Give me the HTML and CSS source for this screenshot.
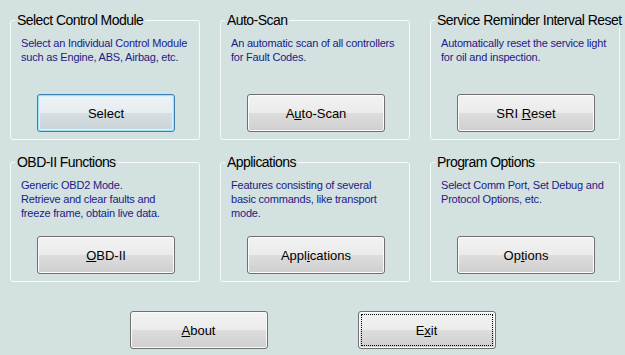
FILE: index.html
```html
<!DOCTYPE html>
<html lang="en">
<head>
  <meta charset="UTF-8" />
  <title>Main Menu</title>
  <link rel="stylesheet" href="styles.css">
</head>
<body>
  <div class="groups">
    <fieldset class="group">
      <legend>Select Control Module</legend>
      <p class="desc">Select an Individual Control Module<br>such as Engine, ABS, Airbag, etc.</p>
      <button class="btn default">Select</button>
    </fieldset>
    <fieldset class="group">
      <legend>Auto-Scan</legend>
      <p class="desc">An automatic scan of all controllers<br>for Fault Codes.</p>
      <button class="btn">A<u>u</u>to-Scan</button>
    </fieldset>
    <fieldset class="group">
      <legend>Service Reminder Interval Reset</legend>
      <p class="desc">Automatically reset the service light<br>for oil and inspection.</p>
      <button class="btn">SRI <u>R</u>eset</button>
    </fieldset>
    <fieldset class="group">
      <legend>OBD-II Functions</legend>
      <p class="desc">Generic OBD2 Mode.<br>Retrieve and clear faults and<br>freeze frame, obtain live data.</p>
      <button class="btn"><u>O</u>BD-II</button>
    </fieldset>
    <fieldset class="group">
      <legend>Applications</legend>
      <p class="desc">Features consisting of several<br>basic commands, like transport<br>mode.</p>
      <button class="btn">Appl<u>i</u>cations</button>
    </fieldset>
    <fieldset class="group">
      <legend>Program Options</legend>
      <p class="desc">Select Comm Port, Set Debug and<br>Protocol Options, etc.</p>
      <button class="btn">Op<u>t</u>ions</button>
    </fieldset>
  </div>
  <div class="bottom">
    <button class="btn"><u>A</u>bout</button>
    <button class="btn focused">E<u>x</u>it</button>
  </div>
</body>
</html>
```

FILE: styles.css
```css
* { box-sizing: border-box; }
html, body { margin: 0; padding: 0; }
body {
  background-color: #d3e1e1;
  font-family: "Liberation Sans", Arial, sans-serif;
  width: 625px;
  height: 355px;
  overflow: hidden;
  padding-top: 12px;
}
.groups {
  display: grid;
  grid-template-columns: repeat(3, 190px);
  column-gap: 20px;
  row-gap: 14px;
  padding-left: 10px;
}
.group {
  margin: 0;
  padding: 0 4px 0 10px;
  height: 128px;
  border: 1px solid #f7fbfb;
  border-radius: 3px;
  display: flex;
  flex-direction: column;
  min-width: 0;
}
.group legend {
  margin-left: -6px;
  padding: 0 2px;
  font-size: 14px;
  letter-spacing: -0.55px;
  line-height: 16px;
  color: #000;
  white-space: nowrap;
}
.desc {
  margin: 8px 0 0;
  height: 42px;
  font-size: 11px;
  letter-spacing: -0.2px;
  line-height: 14px;
  color: #1b1b86;
  white-space: nowrap;
}
.btn {
  width: 138px;
  height: 38px;
  font-family: "Liberation Sans", Arial, sans-serif;
  font-size: 13px;
  color: #000;
  border: 1px solid #707070;
  border-radius: 3px;
  background: linear-gradient(#f2f2f2 0%, #ebebeb 50%, #dddddd 50%, #cfcfcf 100%);
  box-shadow: inset 0 0 0 1px #fbfbfb;
  padding: 0;
  cursor: pointer;
}
.group .btn {
  margin: 16px 0 0 16px;
}
.btn.default {
  border-color: #3c7fb1;
  box-shadow: inset 0 0 0 1px #9fe0f5, inset 0 0 0 2px #d8f3fb;
  background: linear-gradient(#eef3f5 0%, #e6ecef 50%, #d6dee2 50%, #cad3d7 100%);
}
.btn.focused {
  outline: 1px dotted #000;
  outline-offset: -4px;
}
.bottom {
  display: flex;
  justify-content: center;
  gap: 90px;
  margin-top: 29px;
}
```
